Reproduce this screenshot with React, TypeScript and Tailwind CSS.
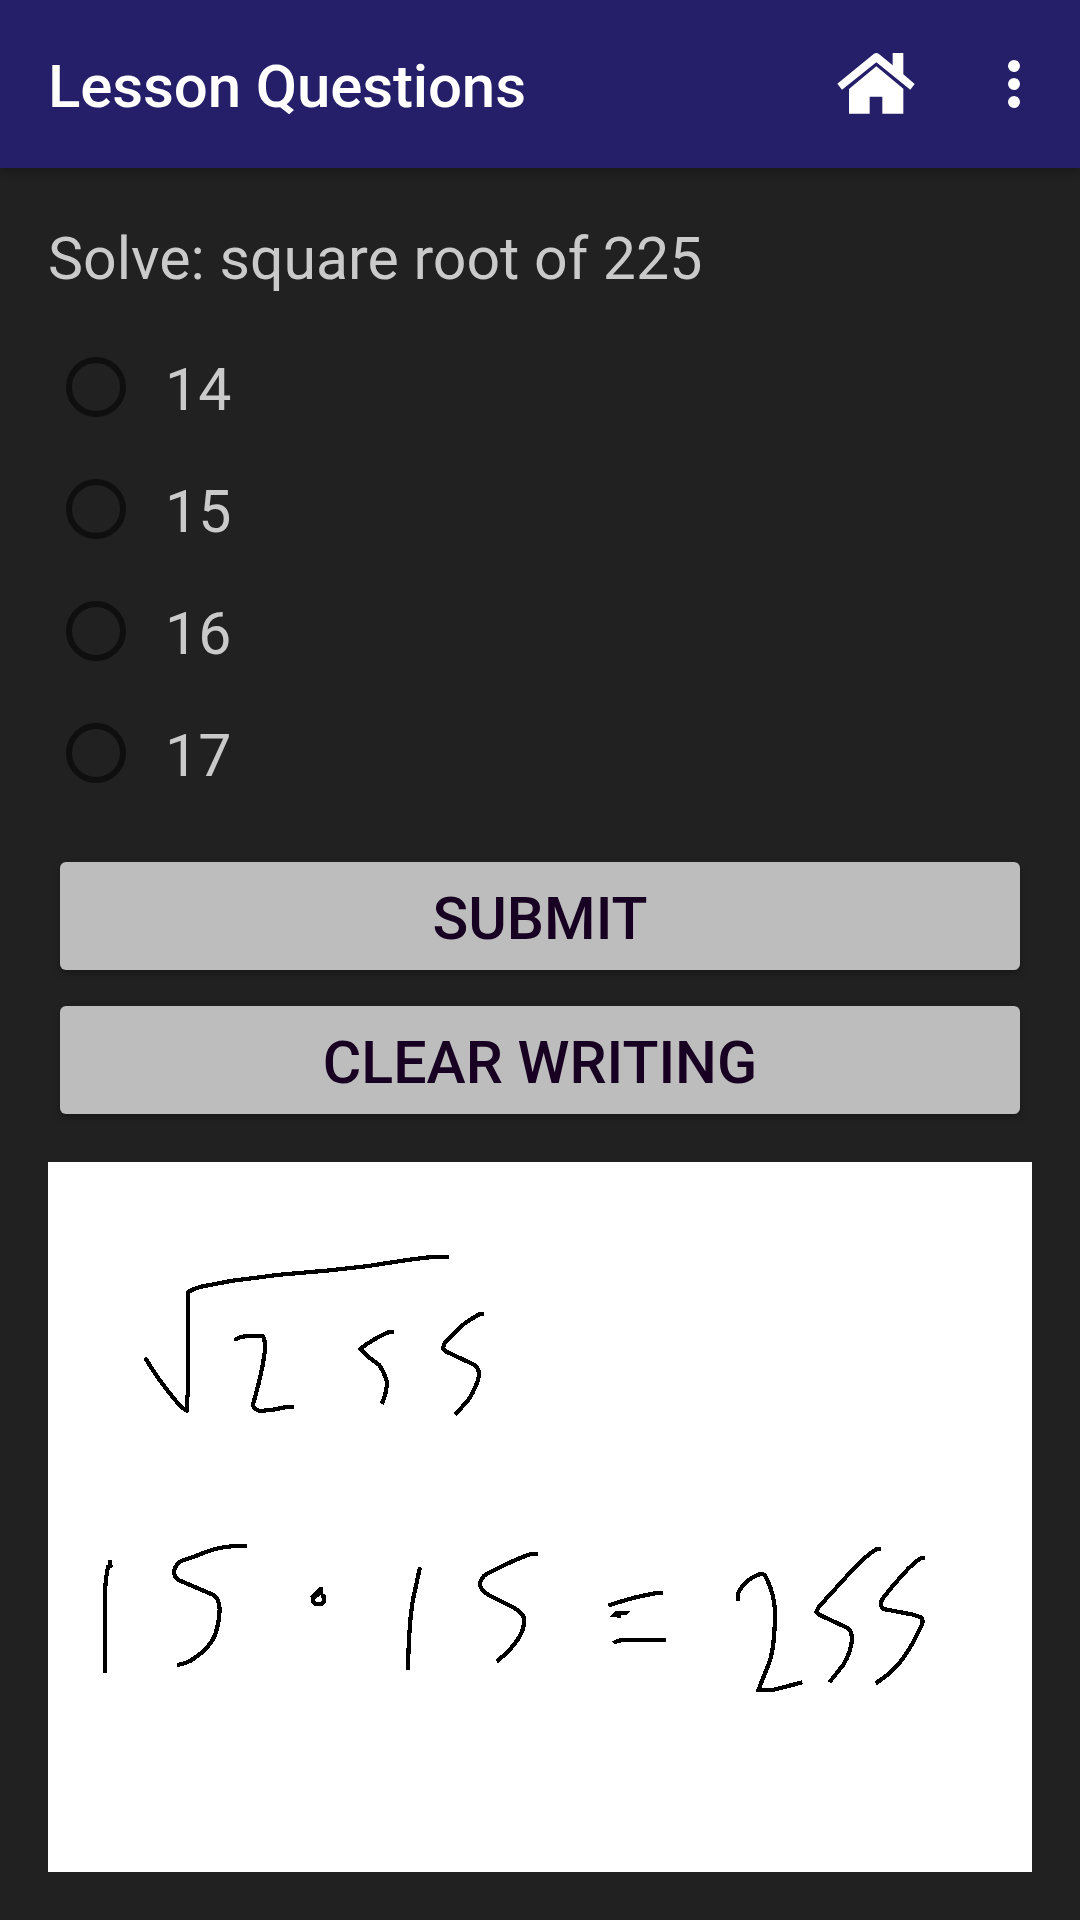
const options = ["14", "15", "16", "17"];

function HomeIcon() {
  return (
    <svg viewBox="108 66 240 189" className="h-[63px] w-20" fill="#fff" aria-hidden="true">
      <path d="M112 161 L222 71 Q229 67 236 71 L278 106 V69 H310 V133 L344 162 L331 179 L229 97 L126 179 Z" />
      <path d="M229 109 L310 176 V251 H247 V200 H209 V251 H147 V177 Z" />
    </svg>
  );
}

function MoreIcon() {
  return (
    <svg viewBox="0 0 12 48" className="h-12 w-3" fill="#fff" aria-hidden="true">
      <circle cx="6" cy="6" r="6" />
      <circle cx="6" cy="24" r="6" />
      <circle cx="6" cy="42" r="6" />
    </svg>
  );
}

function Handwriting() {
  return (
    <svg
      viewBox="48 1162 984 710"
      className="block h-full w-full"
      fill="none"
      stroke="#000"
      strokeWidth="12.6"
      strokeLinejoin="round"
      shapeRendering="crispEdges"
    >
      <g transform="translate(130 1240) scale(0.33333)">
        <path d="M45 353 C75 403 108 447 137 482 C150 497 161 507 170 512 V480 L174 461 V156 Q190 146 213 140 L308 122 L450 104 L600 91 L715 78 Q815 62 885 53 L915 51 H957" />
        <path d="M316 303 Q320 292 345 289 Q370 286 396 288 Q402 290 403 300 Q407 320 403 345 C395 405 382 445 370 490 Q366 506 390 513 L430 509 L470 501 H492" />
        <path d="M792 275 H780 Q735 293 690 327 Q715 353 748 375 Q762 396 770 422 Q773 453 755 492" />
        <path d="M1062 222 H1049 L1008 247 Q970 278 943 311 L939 325 L945 333 L1034 375 Q1045 383 1048 403 Q1041 440 1016 478 L976 524" />
      </g>
      <g transform="translate(80 1520) scale(0.33333)">
        <path d="M89 120 V138 M97 135 L84 140 L78 175 L75 215 V459" />
        <path d="M502 77 Q430 76 380 95 L350 107 L303 123 Q278 141 283 163 Q285 175 300 182 L400 225 Q418 235 419 269 Q417 315 403 350 C383 390 350 410 330 423 Q310 433 291 435" />
        <path d="M688 231 L719 201 H729 V222 L706 235 Z" fill="#000" stroke="none" />
        <path d="M711 222 L699 235 V245 L705 252 H726 L733 245 V229 H723" />
      </g>
      <g transform="translate(380 1520) scale(0.33333)">
        <path d="M120 142 L103 220 Q87 285 84 450" />
        <path d="M473 102 H452 Q395 122 320 162 Q301 173 300 195 Q303 211 324 224 L399 262 Q430 280 432 295 Q434 325 418 350 Q403 380 350 425" />
        <path d="M685 257 Q740 238 780 229 L825 220 H849 M701 369 Q710 360 740 360 H858" />
        <path d="M690 290 L707 273 H750 L740 284 H723 V293 H711 V290 Z" fill="#000" stroke="none" />
      </g>
      <g transform="translate(700 1520) scale(0.33333)">
        <path d="M113 242 V224 Q122 202 133 192 Q160 166 186 161 Q194 163 200 176 Q223 222 225 275 Q225 385 205 435 L187 480 L175 511 H215 L280 494 L307 487" />
        <path d="M543 87 H530 Q495 108 450 158 L357 260 L349 276 L355 283 L445 325 Q456 335 456 360 Q452 398 430 434 L405 466 L388 487" />
        <path d="M675 114 H664 Q638 130 610 162 Q573 203 547 237 Q537 256 550 267 L640 284 L664 293 Q671 302 665 315 L640 366 C603 431 580 455 527 490" />
      </g>
    </svg>
  );
}

export default function App() {
  return (
    <div className="flex h-[1920px] w-[1080px] flex-col bg-[#212121] font-[Roboto,sans-serif] text-[59px] leading-[70px]">
      <header className="flex h-[168px] shrink-0 items-center bg-[#241f68] pl-12 pr-[60px] shadow-[0_3px_10px_rgba(0,0,0,0.3)]">
        <h1 className="flex-1 pt-1.5 text-[60px] font-medium leading-[70px] tracking-[-0.13px] text-white">
          Lesson Questions
        </h1>
        <div className="mr-[92px] pb-0.5">
          <HomeIcon />
        </div>
        <button aria-label="More options">
          <MoreIcon />
        </button>
      </header>

      <main className="flex flex-1 flex-col px-12 pb-12 pt-14 text-[#cacaca]">
        <p>Solve: square root of 225</p>

        <div className="mt-8" role="radiogroup">
          {options.map((option) => (
            <label key={option} className="flex h-[122px] items-center pl-[18px]">
              <span className="size-[60px] rounded-full border-[6px] border-[#0f0f0f]" />
              <span className="ml-[39px] pt-1.5">{option}</span>
            </label>
          ))}
        </div>

        <div className="mt-12 flex flex-col gap-9 px-3 text-[#180022]">
          <button className="h-[108px] rounded-md bg-[#bdbdbd] pt-1.5 font-medium shadow-[0_4px_6px_rgba(0,0,0,0.25)]">
            SUBMIT
          </button>
          <button className="h-[108px] rounded-md bg-[#bdbdbd] pt-1.5 font-medium shadow-[0_4px_6px_rgba(0,0,0,0.25)]">
            CLEAR WRITING
          </button>
        </div>

        <div className="mt-12 h-[710px] bg-white">
          <Handwriting />
        </div>
      </main>
    </div>
  );
}
